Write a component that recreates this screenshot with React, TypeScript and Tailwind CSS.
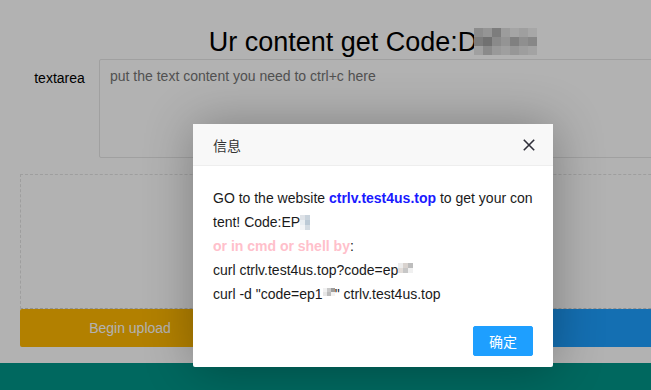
import React from 'react';

// pixelated blur used to hide the codes in the screenshot
const Mosaic: React.FC<{ rows: string[][]; cell: number; className?: string }> = ({ rows, cell, className }) => (
  <span className={`inline-flex flex-col align-middle ${className ?? ''}`}>
    {rows.map((row, i) => (
      <span key={i} className="flex">
        {row.map((c, j) => (
          <span key={j} style={{ backgroundColor: c, width: cell, height: cell }} />
        ))}
      </span>
    ))}
  </span>
);

const titleMosaic = [
  ['#c9c9c9', '#d6d6d6', '#b4b4b4', '#e0e0e0', '#ececec', '#e4e4e4', '#f0f0f0'],
  ['#b2b2b2', '#a2a2a2', '#c6c6c6', '#d4d4d4', '#b8b8b8', '#cdcdcd', '#c2c2c2'],
  ['#e6e6e6', '#c6c6c6', '#dcdcdc', '#e4e4e4', '#d8d8d8', '#e2e2e2', '#eaeaea'],
];

const epMosaic = [
  ['#dfe3e8', '#c9d3dc'],
  ['#e9eef2', '#bccad6'],
  ['#f3f5f7', '#d3dbe2'],
];

const curlMosaic = [
  ['#ececec', '#d9d3cf', '#bdbdbd'],
  ['#e2dcd8', '#c7c7c7', '#f0f0f0'],
];

const curlDMosaic = [
  ['#f1f1f1', '#c9c9c9', '#9d9d9d'],
  ['#e6e6e6', '#bcbcbc', '#f3f3f3'],
];

const App: React.FC = () => {
  return (
    <div className="relative w-[651px] h-[390px] overflow-hidden bg-white font-['Liberation_Sans',Arial,sans-serif]">
      {/* page under the shade */}
      <div className="w-[746px] flex flex-col h-full">
        <div className="px-[20px] pt-[25px]">
          <h1 className="h-[34px] leading-[34px] text-center text-[27px] text-black">
            Ur content get Code:D<Mosaic rows={titleMosaic} cell={9} className="-ml-[3px] -mt-[4px]" />
          </h1>

          <div className="flex">
            <label className="w-[79px] shrink-0 pt-[9px] leading-[20px] text-center text-[14px] text-black">textarea</label>
            <div className="flex-1 h-[99px] border border-[#e6e6e6] rounded-[2px] px-[10px] pt-[6px] leading-[20px] text-[14px] text-[#757575]">
              put the text content you need to ctrl+c here
            </div>
          </div>

          <div className="mt-[16px] h-[135px] border border-dashed border-[#e2e2e2] border-b-[#d0d0d0]" />

          <div className="flex gap-[6px]">
            <button className="w-[220px] h-[38px] rounded-[2px] bg-[#FFB800] text-white text-[14px]">Begin upload</button>
            <button className="flex-1 h-[38px] rounded-[2px] bg-[#1E9FFF]" />
          </div>
        </div>
        <div className="mt-[16px] flex-1 bg-[#009688]" />
      </div>

      {/* shade */}
      <div className="absolute inset-0 bg-black/30" />

      {/* dialog */}
      <div className="absolute left-[193px] top-[124px] w-[360px] bg-white rounded-[2px] shadow-[1px_1px_50px_rgba(0,0,0,0.3)]">
        <div className="relative h-[42px] leading-[42px] pl-[20px] bg-[#F8F8F8] border-b border-[#eee] text-[14px] text-[#333] font-['Noto_Sans_CJK_SC',sans-serif]">
          信息
          <svg className="absolute right-[18px] top-[15px]" width="12" height="12" viewBox="0 0 12 12">
            <path d="M0.8 0.8 L11.2 11.2 M11.2 0.8 L0.8 11.2" stroke="#2f2f3a" strokeWidth="1.6" />
          </svg>
        </div>
        <div className="p-[20px] text-[14px] leading-[24px] text-[#1a1a1a] break-all">
          GO to the website <b className="text-[#1a1aff]">ctrlv.test4us.top</b> to get your content! Code:EP
          <Mosaic rows={epMosaic} cell={5} className="-mt-[2px]" />
          <br />
          <b className="text-[#ffc0cb]">or in cmd or shell by</b>:
          <br />
          curl ctrlv.test4us.top?code=ep<Mosaic rows={curlMosaic} cell={5} className="-mt-[6px]" />
          <br />
          curl -d "code=ep1<Mosaic rows={curlDMosaic} cell={4} className="-mt-[6px]" />" ctrlv.test4us.top
        </div>
        <div className="flex justify-end pr-[15px] pb-[11px]">
          <button className="mr-[5px] h-[30px] px-[15px] rounded-[2px] border border-[#1E9FFF] bg-[#1E9FFF] text-white text-[14px] font-['Noto_Sans_CJK_SC',sans-serif]">
            确定
          </button>
        </div>
      </div>
    </div>
  );
};

export default App;
